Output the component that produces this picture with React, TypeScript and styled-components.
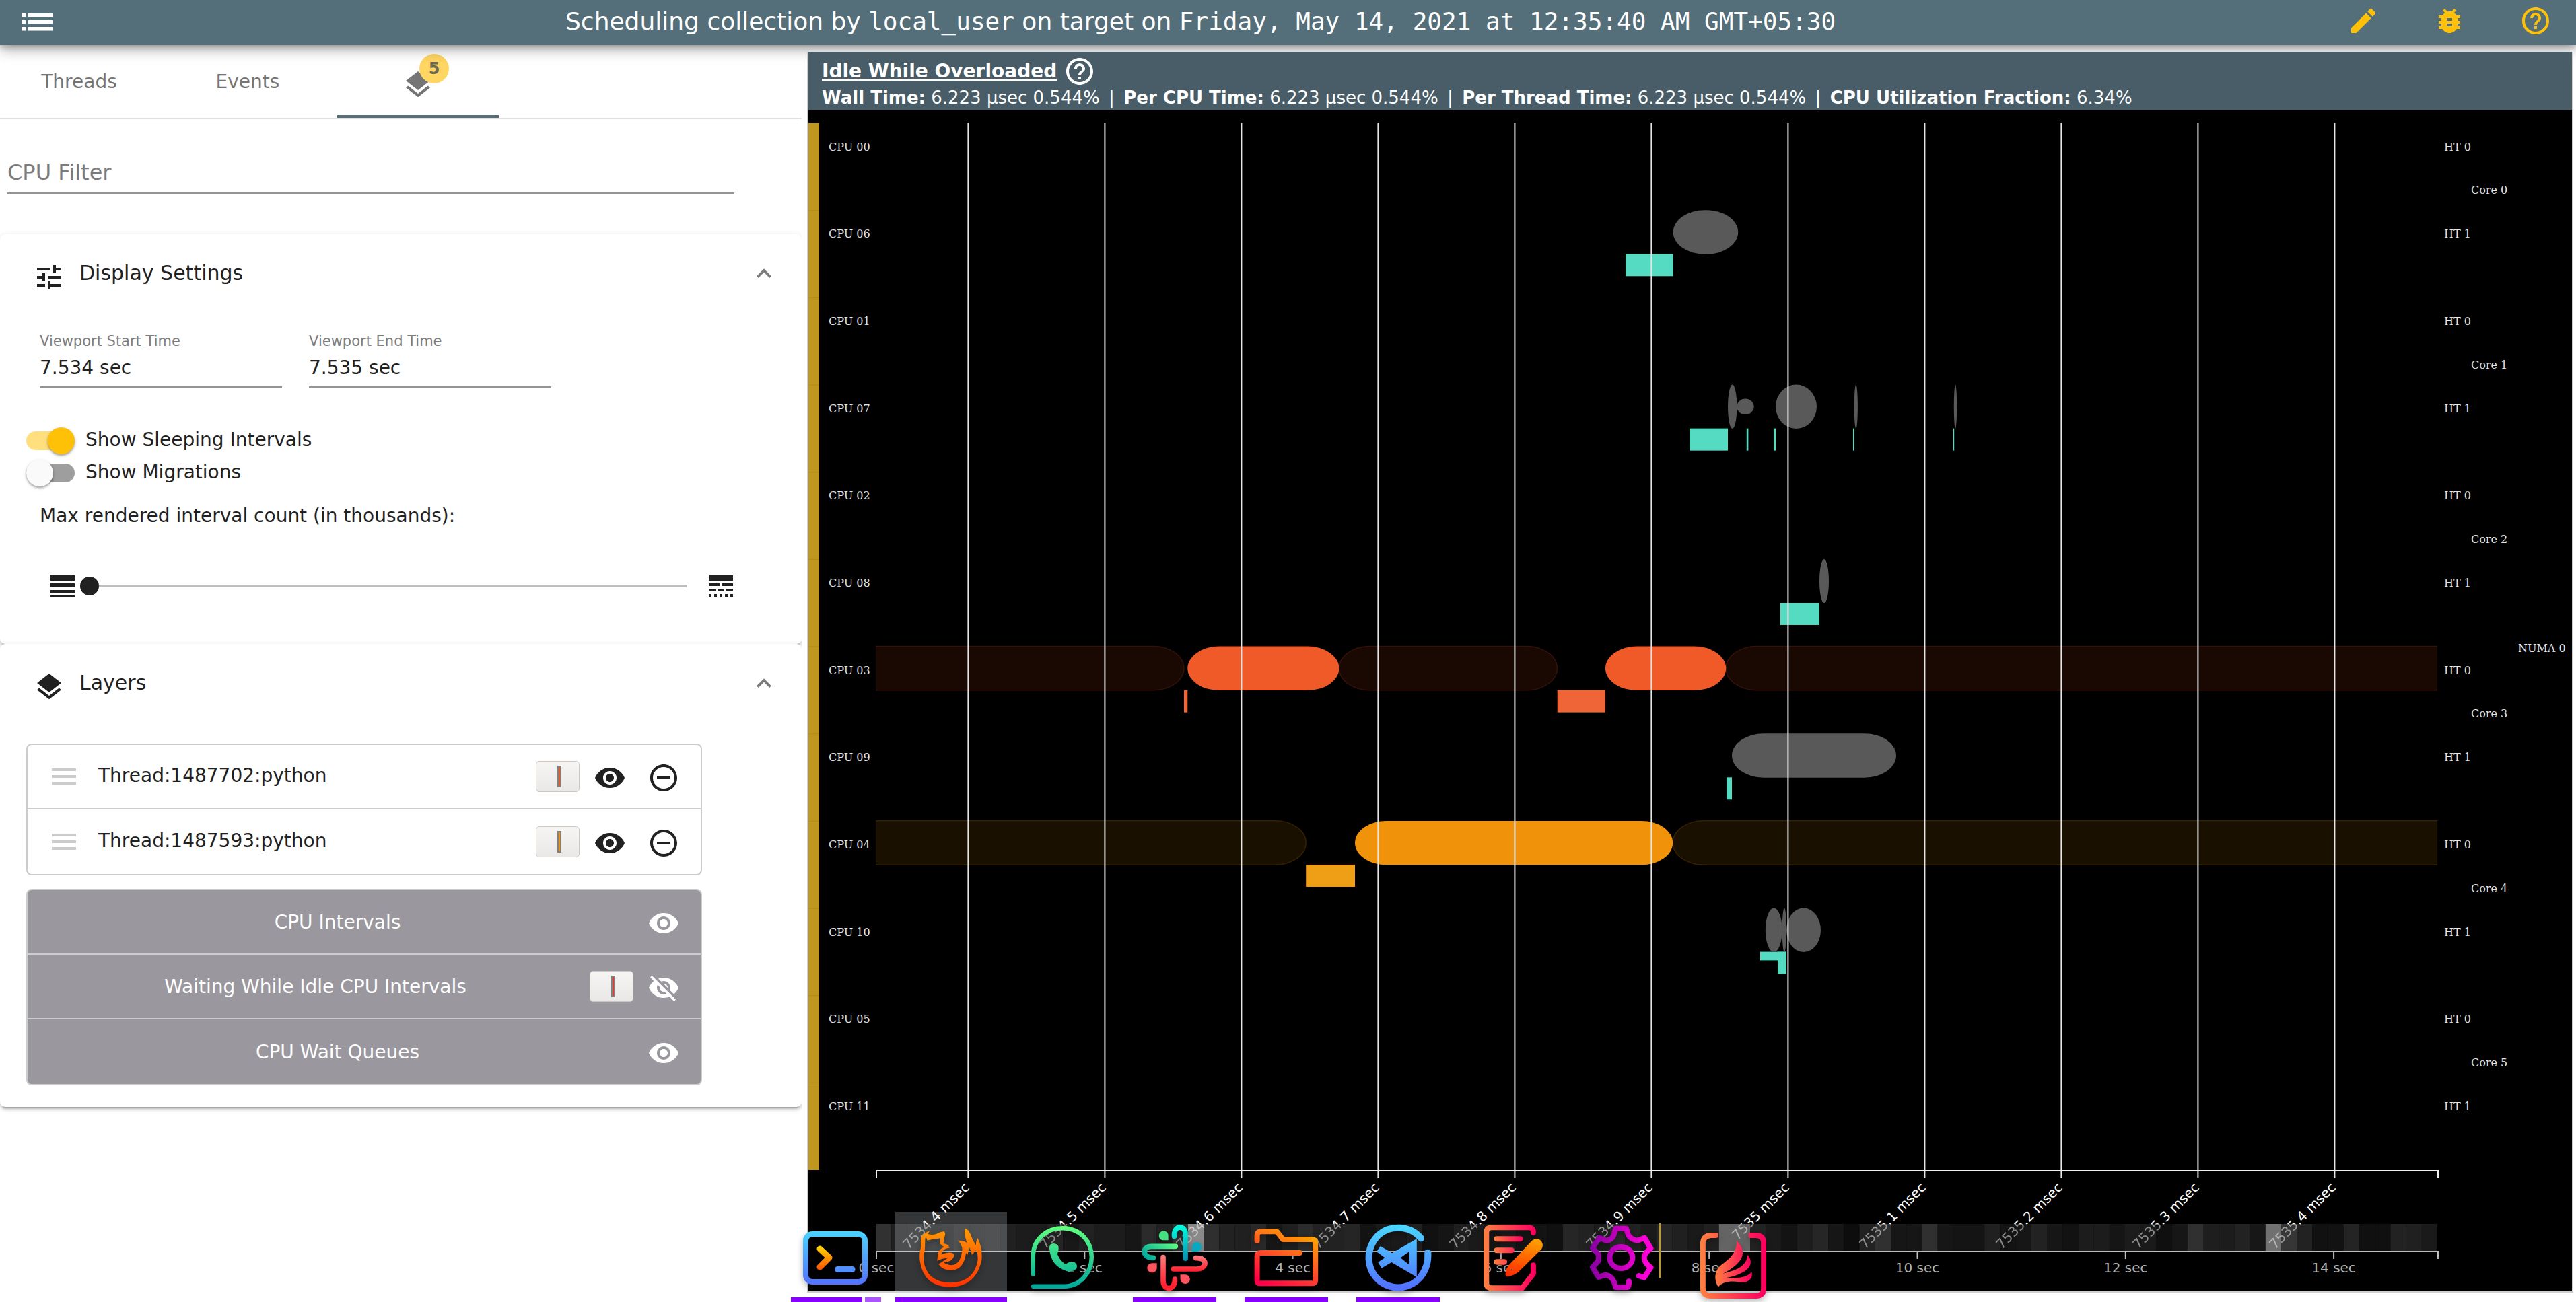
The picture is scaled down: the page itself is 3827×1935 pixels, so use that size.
import React from "react";
import styled, { createGlobalStyle } from "styled-components";

const Global = createGlobalStyle`
  * { box-sizing: border-box; }
  body { margin: 0; background: #fff; font-family: "DejaVu Sans", sans-serif; overflow: hidden; }
`;

const Page = styled.div`
  position: relative;
  width: 3827px;
  height: 1935px;
  display: flex;
  flex-direction: column;
  overflow: hidden;
  color: #212121;
  font-size: 28px;
`;

/* ---------- toolbar ---------- */
const Toolbar = styled.header`
  position: relative;
  z-index: 1;
  height: 67px;
  flex: none;
  display: flex;
  align-items: center;
  padding: 0 36px 5px 32px;
  background: #546e7a;
  color: #fff;
  box-shadow: 0 4px 8px rgba(0, 0, 0, 0.2), 0 8px 18px rgba(0, 0, 0, 0.28);
`;
const MenuSlot = styled.div`
  width: 808px;
  display: flex;
  padding-top: 4px;
`;
const Title = styled.h1`
  margin: 0;
  flex: 1;
  padding-top: 2px;
  font-size: 36px;
  font-weight: 400;
  line-height: 46px;
  white-space: pre;
`;
const Mono = styled.span`
  font-family: "DejaVu Sans Mono", monospace;
`;
const ToolbarActions = styled.div`
  display: flex;
  gap: 80px;
  color: #ffc107;
`;

const Body = styled.div`
  flex: 1;
  display: flex;
  min-height: 0;
`;

/* ---------- sidebar ---------- */
const Sidebar = styled.aside`
  width: 1191px;
  flex: none;
  margin-right: 8px;
  overflow: hidden;
`;
const TabBar = styled.nav`
  height: 110px;
  display: flex;
  border-bottom: 2px solid #e0e0e0;
`;
const Tab = styled.div<{ $w: number; $active?: boolean }>`
  width: ${(p) => p.$w}px;
  height: 108px;
  display: flex;
  align-items: center;
  justify-content: center;
  color: #757575;
  border-bottom: ${(p) => (p.$active ? "4px solid #546e7a" : "0")};
`;
const BadgeAnchor = styled.div`
  position: relative;
  display: flex;
  padding-top: 14px;
`;
const Badge = styled.span`
  position: absolute;
  left: 26px;
  top: -8px;
  width: 44px;
  height: 44px;
  border-radius: 50%;
  background: #ffd662;
  color: #6f6852;
  font-size: 24px;
  font-weight: 700;
  line-height: 44px;
  text-align: center;
`;
const FilterArea = styled.div`
  height: 171px;
  padding: 49px 100px 0 11px;
`;
const FilterField = styled.div`
  height: 62px;
  border-bottom: 2px solid #949494;
  color: #7b7b7b;
  font-size: 32px;
  line-height: 60px;
`;
const Expansion = styled.section<{ $h: number }>`
  height: ${(p) => p.$h}px;
  border-radius: 8px;
  background: #fff;
  box-shadow: 0 6px 2px -4px rgba(0, 0, 0, 0.2), 0 4px 4px rgba(0, 0, 0, 0.14),
    0 2px 10px rgba(0, 0, 0, 0.12);
`;
const ExpansionHeader = styled.div`
  height: 116px;
  display: flex;
  align-items: center;
  padding: 0 45px 0 49px;
  font-size: 30px;
`;
const HeaderIcon = styled.div`
  display: flex;
  padding-top: 12px;
  width: 69px;
`;
const HeaderLabel = styled.div`
  flex: 1;
  line-height: 40px;
`;
const SettingsBody = styled.div`
  padding: 31px 0 0 59px;
`;
const FieldRow = styled.div`
  display: flex;
  gap: 40px;
`;
const Field = styled.div`
  width: 360px;
  border-bottom: 2px solid #949494;
`;
const FieldLabel = styled.div`
  height: 24px;
  line-height: 24px;
  font-size: 21px;
  color: #7d7d7d;
`;
const FieldValue = styled.div`
  height: 55px;
  line-height: 55px;
`;
const Toggles = styled.div`
  margin: 55px 0 0 -20px;
`;
const ToggleRow = styled.div`
  height: 48px;
  display: flex;
  align-items: center;
  gap: 16px;
`;
const ToggleLabel = styled.div`
  line-height: 46px;
  padding-bottom: 2px;
`;
const Track = styled.div<{ $on: boolean }>`
  width: 72px;
  height: 28px;
  border-radius: 14px;
  display: flex;
  align-items: center;
  justify-content: ${(p) => (p.$on ? "flex-end" : "flex-start")};
  background: ${(p) => (p.$on ? "#ffdf7e" : "#9e9e9e")};
`;
const Thumb = styled.div<{ $on: boolean }>`
  width: 40px;
  height: 40px;
  flex: none;
  border-radius: 50%;
  background: ${(p) => (p.$on ? "#ffc107" : "#fafafa")};
  box-shadow: 0 2px 3px rgba(0, 0, 0, 0.3), 0 2px 6px rgba(0, 0, 0, 0.12);
`;
const SliderLabel = styled.div`
  margin-top: 24px;
  line-height: 32px;
`;
const SliderRow = styled.div`
  margin-top: 64px;
  padding: 0 96px 0 10px;
  display: flex;
  align-items: center;
`;
const SliderKnob = styled.div`
  width: 28px;
  height: 28px;
  margin-left: 2px;
  border-radius: 50%;
  background: #212121;
`;
const SliderTrack = styled.div`
  flex: 1;
  height: 4px;
  margin-right: 26px;
  background: #bdbdbd;
`;
const LayerList = styled.div<{ $dark?: boolean }>`
  margin: ${(p) => (p.$dark ? "20px" : "32px")} 148px 0 39px;
  border: 2px solid #ccc;
  border-radius: 8px;
  overflow: hidden;
  background: ${(p) => (p.$dark ? "#9a989e" : "#fff")};
  color: ${(p) => (p.$dark ? "#fff" : "#212121")};
`;
const LayerRow = styled.div<{ $dark?: boolean }>`
  height: 96px;
  display: flex;
  align-items: center;
  padding: 0 31px 0 ${(p) => (p.$dark ? 0 : 36)}px;
  border-bottom: 2px solid #ccc;
  &:last-child { border-bottom: 0; }
`;
const DragHandle = styled.div`
  width: 36px;
  height: 24px;
  margin-right: 33px;
  display: flex;
  flex-direction: column;
  justify-content: space-between;
`;
const DragBar = styled.div`
  height: 4px;
  background: #ccc;
`;
const LayerName = styled.div<{ $center?: boolean; $shift?: number }>`
  flex: 1;
  line-height: 36px;
  text-align: ${(p) => (p.$center ? "center" : "left")};
  padding: ${(p) => (p.$center ? 2 : 0)}px 0 ${(p) => (p.$center ? 0 : 2)}px ${(p) => p.$shift || 0}px;
`;
const Swatch = styled.div`
  width: 65px;
  height: 46px;
  margin-right: 21px;
  display: flex;
  align-items: center;
  justify-content: center;
  padding-left: 5px;
  border: 1px solid #cdc7c2;
  border-radius: 5px;
  background: linear-gradient(#f6f5f4, #e9e8e6);
`;
const SwatchColor = styled.div<{ $c: string }>`
  width: 6px;
  height: 32px;
  border: 2px solid #808080;
  background: ${(p) => p.$c};
`;
const IconSlot = styled.div<{ $gap?: number }>`
  display: flex;
  padding-top: 4px;
  margin-right: ${(p) => p.$gap || 0}px;
`;

/* ---------- heatmap panel ---------- */
const Main = styled.main`
  width: 2624px;
  height: 1844px;
  flex: none;
  border: 2px solid #cfcfcf;
  border-top: 0;
  margin-top: 10px;
  position: relative;
  z-index: 2;
  background: #000;
  overflow: hidden;
`;
const Banner = styled.div`
  height: 86px;
  padding: 5px 20px 0;
  background: #485d67;
  color: #fff;
`;
const BannerTitle = styled.div`
  height: 48px;
  display: flex;
  align-items: center;
  gap: 10px;
  font-weight: 700;
  line-height: 48px;
`;
const Underlined = styled.span`
  text-decoration: underline;
  text-decoration-thickness: 3px;
`;
const Stats = styled.div`
  display: flex;
  height: 30px;
  line-height: 30px;
  font-size: 26px;
  white-space: pre;
`;
const Bar = styled.span`
  margin: 0 13.4px;
`;
const ChartSvg = styled.svg`
  display: block;
`;

/* ---------- dock ---------- */
const Highlight = styled.div`
  position: absolute;
  z-index: 3;
  left: 1330px;
  top: 1801px;
  width: 166px;
  height: 127px;
  background: rgba(218, 222, 230, 0.245);
`;
const Marker = styled.div<{ $x: number; $w: number; $light?: boolean }>`
  position: absolute;
  z-index: 3;
  left: ${(p) => p.$x}px;
  top: 1928px;
  width: ${(p) => p.$w}px;
  height: 7px;
  background: ${(p) => (p.$light ? "#ac55ff" : "#8800ff")};
`;
const DockSvg = styled.svg<{ $x: number; $y: number }>`
  position: absolute;
  z-index: 4;
  left: ${(p) => p.$x}px;
  top: ${(p) => p.$y}px;
  overflow: visible;
  fill: none;
  stroke-linecap: round;
  stroke-linejoin: round;
  filter: drop-shadow(0 4px 5px rgba(0, 0, 0, 0.3));
  path { vector-effect: non-scaling-stroke; }
`;

/* ---------- icons ---------- */
const paths = {
  edit: "M3 17.25V21h3.75L17.81 9.94l-3.75-3.75L3 17.25zM20.71 7.04a.996.996 0 0 0 0-1.41l-2.34-2.34a.996.996 0 0 0-1.41 0l-1.83 1.83 3.75 3.75 1.83-1.83z",
  bug: "M20 8h-2.81c-.45-.78-1.07-1.45-1.82-1.96L17 4.41 15.59 3l-2.17 2.17C12.96 5.06 12.49 5 12 5c-.49 0-.96.06-1.41.17L8.41 3 7 4.41l1.62 1.63C7.88 6.55 7.26 7.22 6.81 8H4v2h2.09c-.05.33-.09.66-.09 1v1H4v2h2v1c0 .34.04.67.09 1H4v2h2.81c1.04 1.79 2.97 3 5.19 3s4.15-1.21 5.19-3H20v-2h-2.09c.05-.33.09-.66.09-1v-1h2v-2h-2v-1c0-.34-.04-.67-.09-1H20V8zm-6 8h-4v-2h4v2zm0-4h-4v-2h4v2z",
  help: "M11 18h2v-2h-2v2zm1-16C6.48 2 2 6.48 2 12s4.48 10 10 10 10-4.48 10-10S17.52 2 12 2zm0 18c-4.41 0-8-3.59-8-8s3.59-8 8-8 8 3.59 8 8-3.59 8-8 8zm0-14c-2.21 0-4 1.79-4 4h2c0-1.1.9-2 2-2s2 .9 2 2c0 2-3 1.75-3 5h2c0-2.25 3-2.5 3-5 0-2.21-1.79-4-4-4z",
  layers: "M11.99 18.54l-7.37-5.73L3 14.07l9 7 9-7-1.63-1.27-7.38 5.74zM12 16l7.36-5.73L21 9l-9-7-9 7 1.63 1.27L12 16z",
  tune: "M3 17v2h6v-2H3zM3 5v2h10V5H3zm10 16v-2h8v-2h-8v-2h-2v6h2zM7 9v2H3v2h4v2h2V9H7zm14 4v-2H11v2h10zm-6-4h2V7h4V5h-4V3h-2v6z",
  weight: "M3 17h18v-2H3v2zm0 3h18v-1H3v1zm0-7h18v-3H3v3zm0-9v4h18V4H3z",
  style: "M3 16h5v-2H3v2zm6.5 0h5v-2h-5v2zm6.5 0h5v-2h-5v2zM3 20h2v-2H3v2zm4 0h2v-2H7v2zm4 0h2v-2h-2v2zm4 0h2v-2h-2v2zm4 0h2v-2h-2v2zM3 12h8v-2H3v2zm10 0h8v-2h-8v2zM3 4v4h18V4H3z",
  eye: "M12 4.5C7 4.5 2.73 7.61 1 12c1.73 4.39 6 7.5 11 7.5s9.27-3.11 11-7.5c-1.73-4.39-6-7.5-11-7.5zM12 17c-2.76 0-5-2.24-5-5s2.24-5 5-5 5 2.24 5 5-2.24 5-5 5zm0-8c-1.66 0-3 1.34-3 3s1.34 3 3 3 3-1.34 3-3-1.34-3-3-3z",
  eyeOff: "M12 7c2.76 0 5 2.24 5 5 0 .65-.13 1.26-.36 1.83l2.92 2.92c1.51-1.26 2.7-2.89 3.43-4.75-1.73-4.39-6-7.5-11-7.5-1.4 0-2.74.25-3.98.7l2.16 2.16C10.74 7.13 11.35 7 12 7zM2 4.27l2.28 2.28.46.46C3.08 8.3 1.78 10.02 1 12c1.73 4.39 6 7.5 11 7.5 1.55 0 3.03-.3 4.38-.84l.42.42L19.73 22 21 20.73 3.27 3 2 4.27zM7.53 9.8l1.55 1.55c-.05.21-.08.43-.08.65 0 1.66 1.34 3 3 3 .22 0 .44-.03.65-.08l1.55 1.55c-.67.33-1.41.53-2.2.53-2.76 0-5-2.24-5-5 0-.79.2-1.53.53-2.2zm4.31-.78l3.15 3.15.02-.16c0-1.66-1.34-3-3-3l-.17.01z",
  remove: "M7 11v2h10v-2H7zm5-9C6.48 2 2 6.48 2 12s4.48 10 10 10 10-4.48 10-10S17.52 2 12 2zm0 18c-4.41 0-8-3.59-8-8s3.59-8 8-8 8 3.59 8 8-3.59 8-8 8z",
};
const Icon = ({ name }: { name: keyof typeof paths }) => (
  <svg width="48" height="48" viewBox="0 0 24 24" fill="currentColor">
    <path d={paths[name]} />
  </svg>
);
const MenuIcon = () => (
  <svg width="46" height="26" fill="#fff">
    {[0, 10, 20].map((y) => (
      <React.Fragment key={y}>
        <rect x="0" y={y} width="6" height="5.5" />
        <rect x="10" y={y} width="36" height="5.5" />
      </React.Fragment>
    ))}
  </svg>
);
const Chevron = () => (
  <svg width="22" height="14" viewBox="0 0 22 14" fill="none" stroke="#7d7d7d" strokeWidth="3.8">
    <path d="M1.4 12.6 11 3l9.6 9.6" />
  </svg>
);

/* ---------- chart ---------- */
const ROW = 129.667;
const TOP = 183;
const cpus = ["00", "06", "01", "07", "02", "08", "03", "09", "04", "10", "05", "11"];
const msecTicks = ["7534.4", "7534.5", "7534.6", "7534.7", "7534.8", "7534.9", "7535", "7535.1", "7535.2", "7535.3", "7535.4"];

type Pill = [row: number, x0: number, x1: number, fill: string];
const G = "#595959";
const T = "#55dbc1";
const pills: Pill[] = [
  [1, 2485.7, 2582.2, G],
  [3, 2567, 2580.4, G],
  [3, 2638, 2699, G],
  [3, 2754.7, 2759.9, G],
  [3, 2902.8, 2907.2, G],
  [5, 2703, 2717, G],
  [6, 1764.3, 1989.4, "#f05a28"],
  [6, 2385, 2564.2, "#f05a28"],
  [7, 2573, 2817, G],
  [8, 2013, 2485.2, "#f1930a"],
  [9, 2622.8, 2647.7, G],
  [9, 2647.7, 2654, G],
  [9, 2654, 2705, G],
];
const waits: Pill[] = [
  [1, 2415, 2485.7, T],
  [3, 2510, 2567, T],
  [3, 2594.8, 2597.4, T],
  [3, 2635, 2638, T],
  [3, 2753, 2755, T],
  [3, 2901.8, 2903.2, T],
  [5, 2645, 2703, T],
  [6, 1759, 1764.3, "#ef6537"],
  [6, 2313.7, 2385, "#ef6537"],
  [7, 2565, 2573, T],
  [8, 1940.2, 2013, "#ef9f15"],
  [9, 2641, 2654, T],
];
const heat =
  "31 20 22 1c 1e 26 24 26 20 1c 1c 25 18 22 1c 1c 16 2b 20 30 8a 2f 22 20 2a 17 1f 2c 22 22 25 13 1a 1a 22 11 15 1e 1a 16 1c 15 14 10 26 22 1c 2a 22 1a 26 20 1a 20 64 64 22 1a 13 1d 26 16 0d 22 30 16 16 30 16 14 14 20 13 16 22 16 12 1c 1c 15 1c 1a 0f 16 30 1e 1c 22 17 70 36 22 11 12 24 10 10 22 20 1a".split(" ");

const half = ROW / 2;
const H = 32.4;

const Sleep = ({ row, x0, x1, fill, line, round }: { row: number; x0: number; x1: number; fill: string; line: string; round: "l" | "r" | "lr" }) => {
  const y0 = TOP + row * ROW - 0.5;
  const y1 = y0 + half + 0.5;
  const l = round.includes("l");
  const r = round.includes("r");
  const h = (y1 - y0) / 2;
  const d = `M${x0 + (l ? 46 : 0)} ${y0}H${x1 - (r ? 46 : 0)}` +
    (r ? `A46 ${h} 0 0 1 ${x1 - 46} ${y1}` : `M${x1} ${y1}`) +
    `H${x0 + (l ? 46 : 0)}` + (l ? `A46 ${h} 0 0 1 ${x0 + 46} ${y0}` : "");
  return (
    <>
      <path d={r ? d : `M${x0 + 46} ${y0}H${x1}V${y1}H${x0 + 46}A46 ${h} 0 0 1 ${x0 + 46} ${y0}`} fill={fill} />
      <path d={d} fill="none" stroke={line} strokeWidth="1.5" />
    </>
  );
};

const MsecLabels = () => (
  <>
    {msecTicks.map((t, i) => (
      <text key={t} transform={`translate(${1441.3 + i * 203} 1766) rotate(-45)`} textAnchor="end" fontSize="20" fill="#fff">
        {t + " msec"}
      </text>
    ))}
  </>
);

const Chart = () => (
  <ChartSvg width="2620" height="1756" viewBox="1201 163 2620 1756">
    <defs>
      <clipPath id="aboveMap"><rect x="1201" y="1739" width="2620" height="80" /></clipPath>
      <clipPath id="onMap"><rect x="1201" y="1819" width="2620" height="40" /></clipPath>
    </defs>
    <rect x="1201" y={TOP} width="16" height="1556" fill="#bf961e" />
    {cpus.slice(1).map((c, i) => (
      <rect key={c} x="1201" y={TOP + (i + 1) * ROW - 0.5} width="16" height="1" fill="#b38b16" />
    ))}

    <Sleep row={6} x0={1301} x1={1759} fill="#1a0902" line="#35110a" round="r" />
    <Sleep row={6} x0={1989.4} x1={2313.5} fill="#1a0902" line="#35110a" round="lr" />
    <Sleep row={6} x0={2564.2} x1={3621} fill="#1a0902" line="#35110a" round="l" />
    <Sleep row={8} x0={1301} x1={1940.2} fill="#1a1000" line="#352004" round="r" />
    <Sleep row={8} x0={2485.2} x1={3621} fill="#1a1000" line="#352004" round="l" />

    {waits.map(([row, x0, x1, fill], i) => (
      <rect key={i} x={x0} y={TOP + row * ROW + half - 0.2} width={x1 - x0} height={H + 0.6} fill={fill} />
    ))}
    <rect x="2615" y="1414.6" width="39" height="12.8" fill={T} />
    {pills.map(([row, x0, x1, fill], i) => (
      <rect key={i} x={x0} y={TOP + row * ROW - 0.4} width={x1 - x0} height={half + 0.6} rx={Math.min(47, (x1 - x0) / 2)} ry={32.7} fill={fill} />
    ))}
    <ellipse cx="2593" cy="604.3" rx="12.7" ry="11.8" fill={G} />

    {cpus.map((c, i) => (
      <g key={c} fontFamily="DejaVu Serif, serif" fontSize="16" fill="#e4e4e4">
        <text x="1231" y={223.5 + i * ROW}>{"CPU " + c}</text>
        <text x="3631" y={223.5 + i * ROW}>{"HT " + (i % 2)}</text>
        {i % 2 === 0 && <text x="3671" y={288.2 + i * ROW}>{"Core " + i / 2}</text>}
      </g>
    ))}
    <text x="3741" y="969" fontFamily="DejaVu Serif, serif" fontSize="16" fill="#e4e4e4">NUMA 0</text>

    {msecTicks.map((t, i) => (
      <rect key={t} x={1437.4 + i * 203} y={TOP} width="2" height="1568" fill="#e6e6e6" />
    ))}
    <path d="M1302 1751V1740H3622V1751" fill="none" stroke="#f0f0f0" strokeWidth="2" />

    {heat.map((h, i) => (
      <rect key={i} x={1301 + i * 23.2} y="1819" width="23.3" height="40" fill={`#${h}${h}${h}`} />
    ))}
    <g clipPath="url(#aboveMap)"><MsecLabels /></g>
    <g clipPath="url(#onMap)" opacity="0.5"><MsecLabels /></g>

    <path d="M1302 1871V1860H3622V1871" fill="none" stroke="#bdbdbd" strokeWidth="2" />
    {[0, 2, 4, 6, 8, 10, 12, 14].map((s, i) => (
      <g key={s}>
        <rect x={1301 + i * 309.3} y="1860" width="2" height="11" fill="#bdbdbd" />
        <text x={1302 + i * 309.3} y="1891" textAnchor="middle" fontSize="20" fill="#b4b4b4">{s + " sec"}</text>
      </g>
    ))}
    <rect x="2465" y="1818" width="2" height="82" fill="#cc9a06" />
  </ChartSvg>
);

/* ---------- dock icons ---------- */
const Grad = ({ id, a, b, v }: { id: string; a: string; b: string; v: [number, number, number, number] }) => (
  <linearGradient id={id} gradientUnits="userSpaceOnUse" x1={v[0]} y1={v[1]} x2={v[2]} y2={v[3]}>
    <stop offset="0" stopColor={a} />
    <stop offset="1" stopColor={b} />
  </linearGradient>
);

const Dock = () => (
  <>
    <Highlight />
    <Marker $x={1175} $w={106} />
    <Marker $x={1285} $w={24} $light />
    <Marker $x={1330} $w={166} />
    <Marker $x={1683} $w={124} />
    <Marker $x={1849} $w={124} />
    <Marker $x={2015} $w={124} />

    <DockSvg $x={1193} $y={1830} width="96" height="79" viewBox="0 0 96 79">
      <defs>
        <Grad id="tb" a="#4bd3ff" b="#5271ff" v={[0, 0, 0, 79]} />
        <Grad id="tc" a="#ffe000" b="#ff5000" v={[0, 20, 0, 58]} />
      </defs>
      <rect x="4" y="4" width="88" height="71" rx="10" stroke="url(#tb)" strokeWidth="8" />
      <path d="M25 26 39 39 25 53" stroke="url(#tc)" strokeWidth="9" />
      <path d="M51.500 56.500H73" stroke="#528fff" strokeWidth="9" />
    </DockSvg>

    <DockSvg $x={1361} $y={1820} width="102.670" height="96.670" viewBox="406 360 230 290" preserveAspectRatio="none">
      <defs><Grad id="ff" a="#ff9a00" b="#ff3000" v={[0, 377, 0, 638]} /></defs>
      <path
        fill="url(#ff)"
        fillRule="evenodd"
        d="M451 387 Q432 398 424 412 Q420 435 423 456 Q415 490 419 525 Q432 638 520 639 Q605 636 624 520 Q628 465 611 420 Q605 433 605 452 Q592 425 588 405 Q580 380 569 377 Q564 400 575 440 Q562 430 545 431 Q562 452 559 480 Q552 538 525 541 Q503 540 497 526 Q522 530 531 505 Q537 483 511 485 Q499 487 491 494 Q490 482 497 474 Q508 463 517 464 Q514 446 497 444 Q498 426 503 402 L500 390 Q484 392 471 403 Q456 408 445 402 Z M436 425 L438 412 L443 431 L459 426 L487 421 Q487 433 484 443 Q494 455 499 460 Q478 474 478 497 L476 521 Q491 511 511 509 L481 536 Q493 563 525 564 Q565 560 572 487 L577 495 Q582 480 582 460 Q589 475 592 495 L604 475 Q612 480 611 520 Q598 618 520 619 Q440 616 431 520 Q430 495 435 470 Z"
      />
    </DockSvg>

    <DockSvg $x={1529} $y={1820} width="102.670" height="96.670" viewBox="782 360 230 290" preserveAspectRatio="none">
      <defs><Grad id="wa" a="#60ff80" b="#00a99d" v={[0, 370, 0, 640]} /></defs>
      <path d="M795 580V500C795 425 840 376 893 376C952 376 990 435 990 505C990 575 950 635 900 635H796" stroke="url(#wa)" strokeWidth="6.500" />
      <path fill="url(#wa)" d="M849 462Q850 444 863 444Q876 445 880 458Q881 475 876 492Q885 522 903 537Q915 522 933 528Q944 538 940 555Q930 572 908 568Q852 545 849 462Z" />
    </DockSvg>

    <DockSvg $x={1691} $y={1817} width="107.140" height="103.330" viewBox="1145 350 240 310" preserveAspectRatio="none">
      <defs>
        <Grad id="s1" a="#00ffe0" b="#0a8fb0" v={[0, 360, 0, 518]} />
        <Grad id="s2" a="#60ff80" b="#00a99d" v={[1270, 440, 1180, 520]} />
        <Grad id="s3" a="#ff8080" b="#ff2030" v={[0, 490, 0, 630]} />
        <Grad id="s4" a="#ff8080" b="#ff2030" v={[0, 495, 0, 565]} />
      </defs>
      <path d="M1265 411C1262 360 1302 360 1302 400V510" stroke="url(#s1)" strokeWidth="7.600" />
      <path d="M1269 456H1188C1157 456 1157 508 1195 507" stroke="url(#s2)" strokeWidth="7.600" />
      <path d="M1337 508C1378 505 1375 557 1340 557H1262" stroke="url(#s4)" strokeWidth="7.600" />
      <path d="M1228 505V610C1228 655 1268 655 1267 602" stroke="url(#s3)" strokeWidth="7.600" />
      <path d="M1214 409C1214 380 1245 380 1245 409V429H1230C1221 429 1214 420 1214 409Z" fill="#45e080" />
      <path d="M1324 459C1324 430 1356 430 1356 459C1356 470 1350 479 1340 479H1324Z" fill="#0aa8c0" />
      <path d="M1175 552C1175 540 1182 531 1191 531H1207V552C1207 580 1175 580 1175 552Z" fill="#ff5560" />
      <path d="M1285 582H1300C1309 582 1317 590 1317 603C1317 630 1285 630 1285 600Z" fill="#ff5560" />
    </DockSvg>

    <DockSvg $x={1860} $y={1823} width="102.670" height="93.330" viewBox="134 369 230 280" preserveAspectRatio="none">
      <defs><Grad id="fo" a="#ff0048" b="#ffa800" v={[200, 640, 345, 410]} /></defs>
      <path d="M151 432V412Q151 391 165 391H217L237 426H332Q345 426 345 440V608Q345 622 332 622H162Q151 622 151 608V500Q151 486 165 486H293" stroke="url(#fo)" strokeWidth="8" />
    </DockSvg>

    <DockSvg $x={2024} $y={1817} width="107.140" height="103.330" viewBox="501 350 240 310" preserveAspectRatio="none">
      <defs><Grad id="vs" a="#4bd8ff" b="#5271ff" v={[0, 360, 0, 640]} /></defs>
      <path d="M696 420C655 355 588 365 555 405C508 470 514 560 560 612C610 660 665 640 695 592Q722 545 719 484" stroke="url(#vs)" strokeWidth="10" />
      <path fill="url(#vs)" fillRule="evenodd" d="M561 455L600 486L682 422V593L598 527L565 553L553 527L576 507L548 480ZM628 507L657 479V538Z" />
    </DockSvg>

    <DockSvg $x={2198} $y={1817} width="98.210" height="103.330" viewBox="892 350 220 310" preserveAspectRatio="none">
      <defs>
        <Grad id="no" a="#ff8040" b="#ff0060" v={[906, 0, 1075, 0]} />
        <Grad id="nl" a="#ff8040" b="#ff0060" v={[940, 0, 1037, 0]} />
        <Grad id="np" a="#ff9a00" b="#ff2a00" v={[1060, 430, 1000, 590]} />
      </defs>
      <path d="M1071 394Q1072 372 1055 372H932Q915 372 915 396V618Q915 642 932 642H1034L1071 578V540" stroke="url(#no)" strokeWidth="8" />
      <path fill="url(#nl)" d="M950 411H1027Q1037 411 1037 423Q1037 435 1027 435H950Q940 435 940 423Q940 411 950 411ZM950 462H998Q1008 462 1008 474Q1008 486 998 486H950Q940 486 940 474Q940 462 950 462ZM950 513H974Q984 513 984 525Q984 538 974 538H950Q940 538 940 525Q940 513 950 513Z" />
      <path d="M986 580Q988 555 1000 540L1072 438Q1083 427 1092 440Q1097 452 1092 462L1018 560Q1006 574 986 580ZM1008 550L1080 453" stroke="url(#np)" strokeWidth="7" />
    </DockSvg>

    <DockSvg $x={2357} $y={1817} width="102.670" height="103.330" viewBox="1248 350 230 310" preserveAspectRatio="none">
      <defs><Grad id="ge" a="#8500a0" b="#ff00d8" v={[1258, 0, 1450, 0]} /></defs>
      <path d="M1389 612Q1390 630 1385 638H1345L1339 612Q1330 588 1312 583L1288 593L1268 549L1288 520V492L1268 463L1290 418L1314 430Q1332 427 1338 408L1345 376H1380L1387 405Q1395 425 1417 430L1441 418L1462 465Q1440 485 1440 507Q1440 530 1462 550L1440 595L1422 587" stroke="url(#ge)" strokeWidth="8" />
      <path d="M1325 506A38 48 0 1 1 1401 506A38 48 0 1 1 1325 506Z" stroke="url(#ge)" strokeWidth="8" />
    </DockSvg>

    <DockSvg $x={2521} $y={1828} width="107.140" height="103.330" viewBox="271 384 240 310" preserveAspectRatio="none">
      <defs>
        <Grad id="pd" a="#ff8040" b="#ff0060" v={[285, 0, 495, 0]} />
        <Grad id="pf" a="#ff8040" b="#ff0060" v={[332, 0, 450, 0]} />
      </defs>
      <path d="M334 408H318Q291 410 291 445V645Q291 678 318 678H467Q493 678 493 645V442Q493 408 467 408H451" stroke="url(#pd)" strokeWidth="7.800" />
      <path fill="url(#pf)" d="M403 432C440 480 428 530 358 578C410 560 435 545 440 495C462 530 452 575 368 598C410 600 440 595 453 570C460 600 440 622 415 617C385 610 360 612 342 638C325 600 332 560 352 540C385 508 405 480 403 432Z" />
    </DockSvg>
  </>
);

const stats: [string, string][] = [
  ["Wall Time:", "6.223 µsec 0.544%"],
  ["Per CPU Time:", "6.223 µsec 0.544%"],
  ["Per Thread Time:", "6.223 µsec 0.544%"],
  ["CPU Utilization Fraction:", "6.34%"],
];

const ThreadRow = ({ name, color }: { name: string; color: string }) => (
  <LayerRow>
    <DragHandle><DragBar /><DragBar /><DragBar /></DragHandle>
    <LayerName>{name}</LayerName>
    <Swatch><SwatchColor $c={color} /></Swatch>
    <IconSlot $gap={32}><Icon name="eye" /></IconSlot>
    <IconSlot><Icon name="remove" /></IconSlot>
  </LayerRow>
);

export default function App() {
  return (
    <Page>
      <Global />
      <Toolbar>
        <MenuSlot><MenuIcon /></MenuSlot>
        <Title>
          Scheduling collection by <Mono>local_user</Mono> on target on <Mono>Friday, May 14, 2021 at 12:35:40 AM GMT+05:30</Mono>
        </Title>
        <ToolbarActions>
          <Icon name="edit" /><Icon name="bug" /><Icon name="help" />
        </ToolbarActions>
      </Toolbar>
      <Body>
        <Sidebar>
          <TabBar>
            <Tab $w={235}>Threads</Tab>
            <Tab $w={266}>Events</Tab>
            <Tab $w={240} $active>
              <BadgeAnchor><Icon name="layers" /><Badge>5</Badge></BadgeAnchor>
            </Tab>
          </TabBar>
          <FilterArea><FilterField>CPU Filter</FilterField></FilterArea>
          <Expansion $h={609}>
            <ExpansionHeader>
              <HeaderIcon><Icon name="tune" /></HeaderIcon>
              <HeaderLabel>Display Settings</HeaderLabel>
              <Chevron />
            </ExpansionHeader>
            <SettingsBody>
              <FieldRow>
                <Field><FieldLabel>Viewport Start Time</FieldLabel><FieldValue>7.534 sec</FieldValue></Field>
                <Field><FieldLabel>Viewport End Time</FieldLabel><FieldValue>7.535 sec</FieldValue></Field>
              </FieldRow>
              <Toggles>
                <ToggleRow><Track $on><Thumb $on /></Track><ToggleLabel>Show Sleeping Intervals</ToggleLabel></ToggleRow>
                <ToggleRow><Track $on={false}><Thumb $on={false} /></Track><ToggleLabel>Show Migrations</ToggleLabel></ToggleRow>
              </Toggles>
              <SliderLabel>Max rendered interval count (in thousands):</SliderLabel>
              <SliderRow>
                <Icon name="weight" /><SliderKnob /><SliderTrack /><Icon name="style" />
              </SliderRow>
            </SettingsBody>
          </Expansion>
          <Expansion $h={688}>
            <ExpansionHeader>
              <HeaderIcon><Icon name="layers" /></HeaderIcon>
              <HeaderLabel>Layers</HeaderLabel>
              <Chevron />
            </ExpansionHeader>
            <LayerList>
              <ThreadRow name="Thread:1487702:python" color="#f05a28" />
              <ThreadRow name="Thread:1487593:python" color="#f1930a" />
            </LayerList>
            <LayerList $dark>
              <LayerRow $dark>
                <LayerName $center>CPU Intervals</LayerName>
                <IconSlot><Icon name="eye" /></IconSlot>
              </LayerRow>
              <LayerRow $dark>
                <LayerName $center $shift={20}>Waiting While Idle CPU Intervals</LayerName>
                <Swatch><SwatchColor $c="#e53935" /></Swatch>
                <IconSlot><Icon name="eyeOff" /></IconSlot>
              </LayerRow>
              <LayerRow $dark>
                <LayerName $center>CPU Wait Queues</LayerName>
                <IconSlot><Icon name="eye" /></IconSlot>
              </LayerRow>
            </LayerList>
          </Expansion>
        </Sidebar>
        <Main>
          <Banner>
            <BannerTitle><Underlined>Idle While Overloaded</Underlined><Icon name="help" /></BannerTitle>
            <Stats>
              {stats.map(([k, v], i) => (
                <React.Fragment key={k}>
                  {i > 0 && <Bar>|</Bar>}
                  <b>{k}</b>
                  <span>{" " + v}</span>
                </React.Fragment>
              ))}
            </Stats>
          </Banner>
          <Chart />
        </Main>
      </Body>
      <Dock />
    </Page>
  );
}
